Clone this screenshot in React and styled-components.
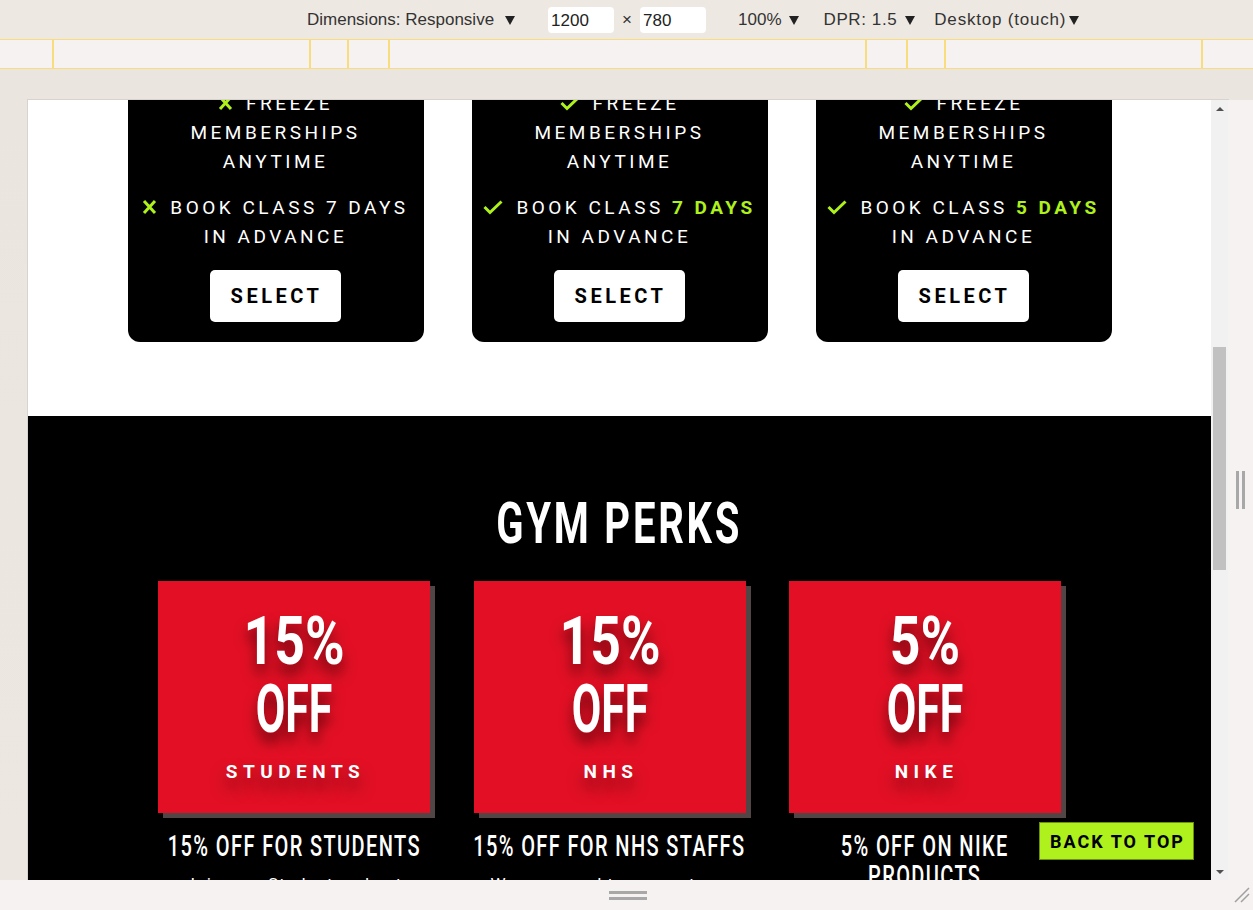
import styled, { createGlobalStyle } from "styled-components";

const LIME = "#aef11c";

const GlobalStyle = createGlobalStyle`
  html, body { margin: 0; padding: 0; }
  body { font-family: Roboto, "Liberation Sans", sans-serif; background: #ede7e1; }
  * { box-sizing: border-box; }
`;

const plans = [
  { mark: "x", days: "7 DAYS", hot: false },
  { mark: "check", days: "7 DAYS", hot: true },
  { mark: "check", days: "5 DAYS", hot: true },
];

const perks = [
  { pct: "15%", label: "STUDENTS", title: ["15% OFF FOR STUDENTS"], text: "Join as a Student and get 15% off your membership." },
  { pct: "15%", label: "NHS", title: ["15% OFF FOR NHS STAFFS"], text: "We are proud to support our NHS heroes." },
  { pct: "5%", label: "NIKE", title: ["5% OFF ON NIKE", "PRODUCTS"], text: "Get 5% off all Nike products in store." },
];

// ruler gaps between the yellow media query ticks
const rulerGaps = [52, 255, 36, 39, 475, 39, 36, 255];

const Frame = styled.div`
  width: 1253px;
  height: 910px;
  display: flex;
  flex-direction: column;
  overflow: hidden;
  background: #ede7e1;
`;

const Toolbar = styled.div`
  height: 39px;
  display: flex;
  align-items: center;
  padding: 1px 0 0 307px;
  background: #eee8e2;
  color: #333;
  font-family: "Liberation Sans", Arial, sans-serif;
  font-size: 17px;
`;

const ToolText = styled.span`
  margin-left: ${p => p.$gap || 0}px;
  letter-spacing: ${p => p.$ls || 0}px;
  white-space: nowrap;
`;

const Caret = styled.span`
  width: 0;
  height: 0;
  margin-left: ${p => p.$gap || 8}px;
  border-left: 5.5px solid transparent;
  border-right: 5.5px solid transparent;
  border-top: 9px solid #222;
`;

const SizeInput = styled.div`
  margin-left: ${p => p.$gap}px;
  width: 66px;
  height: 26px;
  padding: 4px 3px;
  background: #fff;
  border-radius: 4px;
  color: #222;
`;

const Ruler = styled.div`
  height: 30px;
  display: flex;
  background: #f6f2f1;
  border-top: 1px solid #f7dc80;
  border-bottom: 1px solid #f7dc80;
`;

const RulerGap = styled.div`
  width: ${p => p.$w}px;
  flex: none;
`;

const Tick = styled.div`
  width: 2px;
  flex: none;
  background: #f9dd7c;
`;

const Stage = styled.div`
  display: flex;
  padding: 31px 0 0 28px;
  background: linear-gradient(180deg, #ebe5df 0%, #ede7e1 100%);
`;

const Viewport = styled.div`
  width: 1200px;
  height: 780px;
  display: flex;
  box-shadow: 0 0 0 1px #d9d3cf;
`;

const Screen = styled.div`
  position: relative;
  width: 1183px;
  height: 780px;
  overflow: hidden;
  background: #fff;
  font-family: Roboto, "Liberation Sans", sans-serif;
`;

const Scrolled = styled.div`
  margin-top: -31px;
`;

const Pricing = styled.section`
  display: flex;
  justify-content: center;
  gap: 48px;
  padding-bottom: 74px;
  background: #fff;
`;

const PlanCard = styled.div`
  width: 296px;
  display: flex;
  flex-direction: column;
  align-items: center;
  padding: 20px 10px;
  background: #000;
  border-radius: 12px;
  color: #fff;
  text-align: center;
`;

const Feature = styled.div`
  font-size: 19px;
  line-height: 29px;
  letter-spacing: 3.5px;
  white-space: nowrap;
  & + & { margin-top: 17px; }
`;

const Hot = styled.b`
  color: ${LIME};
  font-weight: 700;
`;

const MarkSvg = styled.svg`
  margin-right: 13px;
  overflow: visible;
`;

const SelectButton = styled.button`
  margin-top: 19px;
  width: 131px;
  height: 52px;
  border: none;
  border-radius: 5px;
  background: #fff;
  color: #000;
  font-family: Roboto, "Liberation Sans", sans-serif;
  font-size: 20px;
  font-weight: 700;
  letter-spacing: 3.5px;
  padding: 0 0 0 2px;
`;

const Perks = styled.section`
  background: #000;
  padding: 78px 0 40px;
  color: #fff;
`;

const Center = styled.div`
  display: flex;
  justify-content: center;
`;

const Heading = styled.h2`
  margin: 0;
  font-size: 58px;
  line-height: 58px;
  font-weight: 700;
  letter-spacing: 4px;
  white-space: nowrap;
  transform: scaleX(0.69);
`;

const PerkRow = styled.div`
  display: flex;
  gap: 43.5px;
  padding-left: 130px;
  margin-top: 29px;
`;

const PerkCol = styled.div`
  width: 272px;
  display: flex;
  flex-direction: column;
`;

const PerkCard = styled.div`
  height: 232px;
  padding-top: 26px;
  background: #e31025;
  box-shadow: 5px 5px 0 #524545;
  text-align: center;
  text-shadow: 0 10px 16px rgba(40, 0, 0, 0.65);
`;

const BigLine = styled.div`
  font-size: 67px;
  line-height: 68px;
  font-weight: 700;
  transform: scaleX(${p => p.$sx});
`;

const PerkLabel = styled.div`
  margin-top: 17px;
  font-size: 19px;
  line-height: 24px;
  font-weight: 700;
  letter-spacing: 5.5px;
  padding-left: 3px;
`;

const PerkTitle = styled.h3`
  margin: 18px 0 0;
  font-size: 29px;
  line-height: 30px;
  font-weight: 500;
  letter-spacing: 2px;
  white-space: nowrap;
  text-align: center;
  transform: scaleX(0.69);
`;

const PerkText = styled.p`
  margin: 10px 0 0;
  padding: 0 10px;
  font-size: 17px;
  line-height: 1.6;
  letter-spacing: 1px;
  text-align: center;
`;

const BackToTop = styled.button`
  position: absolute;
  right: 17px;
  bottom: 20px;
  width: 155px;
  height: 38px;
  padding: 0 0 0 2px;
  background: ${LIME};
  border: 1px solid #6f8f14;
  color: #000;
  font-family: Roboto, "Liberation Sans", sans-serif;
  font-size: 18px;
  font-weight: 700;
  letter-spacing: 2px;
`;

const Scrollbar = styled.div`
  width: 17px;
  height: 780px;
  display: flex;
  flex-direction: column;
  background: #f1f1f1;
`;

const ArrowBox = styled.div`
  height: 17px;
  display: flex;
  align-items: center;
  justify-content: center;
`;

const Arrow = styled.span`
  width: 0;
  height: 0;
  border-left: 4px solid transparent;
  border-right: 4px solid transparent;
  ${p => p.$down ? "border-top: 4px solid #505050;" : "border-bottom: 4px solid #505050;"}
`;

const Track = styled.div`
  flex: 1;
  padding: 230px 2px 0;
`;

const Thumb = styled.div`
  height: 223px;
  background: #c1c1c1;
`;

const SideHandle = styled.div`
  width: 25px;
  height: 780px;
  display: flex;
  align-items: center;
  justify-content: center;
  gap: 3px;
  background: #f6f2f1;
`;

const Grip = styled.span`
  background: #a8a8a8;
  width: ${p => p.$w}px;
  height: ${p => p.$h}px;
`;

const BottomBar = styled.div`
  height: 30px;
  display: grid;
  grid-template-columns: 1fr auto 1fr;
  align-items: center;
  background: #f6f2f1;
`;

const BottomGrip = styled.div`
  display: flex;
  flex-direction: column;
  gap: 3px;
  padding-left: 3px;
`;

const Corner = styled.svg`
  justify-self: end;
  margin-right: 2px;
`;

function Mark({ kind }) {
  if (kind === "x") {
    return (
      <MarkSvg width="15" height="14" viewBox="0 0 15 14">
        <path d="M2 1 L13 13 M13 1 L2 13" stroke={LIME} strokeWidth="3" fill="none" />
      </MarkSvg>
    );
  }
  return (
    <MarkSvg width="20" height="14" viewBox="0 0 20 14">
      <path d="M1.5 7 L7 12.5 L18.5 1.5" stroke={LIME} strokeWidth="3" fill="none" />
    </MarkSvg>
  );
}

function Plan({ plan }) {
  return (
    <PlanCard>
      <Feature><Mark kind={plan.mark} />FREEZE<br />MEMBERSHIPS<br />ANYTIME</Feature>
      <Feature>
        <Mark kind={plan.mark} />BOOK CLASS {plan.hot ? <Hot>{plan.days}</Hot> : plan.days}
        <br />IN ADVANCE
      </Feature>
      <SelectButton>SELECT</SelectButton>
    </PlanCard>
  );
}

function Perk({ perk }) {
  return (
    <PerkCol>
      <PerkCard>
        <BigLine $sx={0.8}>{perk.pct}</BigLine>
        <BigLine $sx={0.64}>OFF</BigLine>
        <PerkLabel>{perk.label}</PerkLabel>
      </PerkCard>
      <Center>
        <PerkTitle>
          {perk.title.map((t, i) => <div key={i}>{t}</div>)}
        </PerkTitle>
      </Center>
      <PerkText>{perk.text}</PerkText>
    </PerkCol>
  );
}

export default function App() {
  return (
    <Frame>
      <GlobalStyle />
      <Toolbar>
        <ToolText>Dimensions: Responsive</ToolText>
        <Caret $gap={11} />
        <SizeInput $gap={33}>1200</SizeInput>
        <ToolText $gap={8}>×</ToolText>
        <SizeInput $gap={8}>780</SizeInput>
        <ToolText $gap={32}>100%</ToolText>
        <Caret $gap={7} />
        <ToolText $gap={25} $ls={0.6}>DPR: 1.5</ToolText>
        <Caret $gap={8} />
        <ToolText $gap={19} $ls={0.8}>Desktop (touch)</ToolText>
        <Caret $gap={3} />
      </Toolbar>
      <Ruler>
        {rulerGaps.map((w, i) => [<RulerGap key={"g" + i} $w={w} />, <Tick key={"t" + i} />])}
      </Ruler>
      <Stage>
        <Viewport>
          <Screen>
            <Scrolled>
              <Pricing>
                {plans.map((p, i) => <Plan key={i} plan={p} />)}
              </Pricing>
              <Perks>
                <Center><Heading>GYM PERKS</Heading></Center>
                <PerkRow>
                  {perks.map((p, i) => <Perk key={i} perk={p} />)}
                </PerkRow>
              </Perks>
            </Scrolled>
            <BackToTop>BACK TO TOP</BackToTop>
          </Screen>
          <Scrollbar>
            <ArrowBox><Arrow /></ArrowBox>
            <Track><Thumb /></Track>
            <ArrowBox><Arrow $down /></ArrowBox>
          </Scrollbar>
        </Viewport>
        <SideHandle>
          <Grip $w={3} $h={38} />
          <Grip $w={3} $h={38} />
        </SideHandle>
      </Stage>
      <BottomBar>
        <span />
        <BottomGrip>
          <Grip $w={38} $h={3} />
          <Grip $w={38} $h={3} />
        </BottomGrip>
        <Corner width="18" height="18" viewBox="0 0 18 18">
          <path d="M2 16 L16 2 M8 16 L16 8" stroke="#a0a0a0" strokeWidth="1.5" />
        </Corner>
      </BottomBar>
    </Frame>
  );
}
